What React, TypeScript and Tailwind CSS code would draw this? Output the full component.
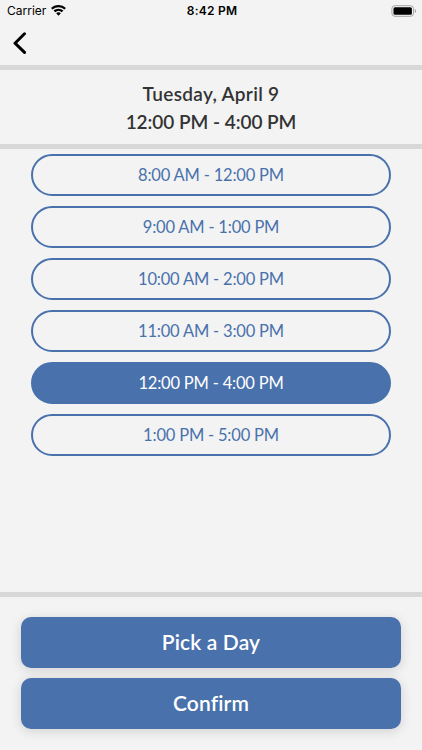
import clsx from 'clsx';

const slots = [
  '8:00 AM - 12:00 PM',
  '9:00 AM - 1:00 PM',
  '10:00 AM - 2:00 PM',
  '11:00 AM - 3:00 PM',
  '12:00 PM - 4:00 PM',
  '1:00 PM - 5:00 PM',
];

const selectedSlot = '12:00 PM - 4:00 PM';

function StatusBar() {
  return (
    <div className="grid h-[22px] grid-cols-3 items-center pr-[5px] pl-[7px] font-['Inter',sans-serif] text-black">
      <div className="flex items-center gap-[5px]">
        <span className="text-[12px] leading-[22px]">Carrier</span>
        <svg className="-mt-px" width="15" height="11" viewBox="0 0 15 11" fill="currentColor">
          <path d="M7.5 0C4.6 0 2 1.1 0 2.9l1.6 1.7a8.6 8.6 0 0 1 11.8 0L15 2.9A11 11 0 0 0 7.5 0Z" />
          <path d="M7.5 3.7c-1.9 0-3.6.7-4.9 1.9l1.6 1.7a4.8 4.8 0 0 1 6.6 0l1.6-1.7a7.2 7.2 0 0 0-4.9-1.9Z" />
          <path d="M7.5 7.3c-.9 0-1.7.3-2.3.9l2.3 2.5 2.3-2.5c-.6-.6-1.4-.9-2.3-.9Z" />
        </svg>
      </div>
      <span className="text-center text-[12px] leading-[22px] font-semibold tracking-[0.25px]">8:42 PM</span>
      <svg className="-mt-px justify-self-end" width="26" height="12" viewBox="0 0 26 12">
        <rect x="0.9" y="0.7" width="21.6" height="10.6" rx="3" fill="none" stroke="#a3a3a3" />
        <rect x="2.5" y="2.3" width="18.4" height="7.4" rx="1.5" fill="#000" />
        <path d="M23.8 4v4c.8-.3 1.3-1.1 1.3-2s-.5-1.7-1.3-2Z" fill="#a3a3a3" />
      </svg>
    </div>
  );
}

function SlotButton({ label, selected }: { label: string; selected: boolean }) {
  return (
    <button
      type="button"
      className={clsx(
        'flex h-[42px] w-full items-center justify-center rounded-full border-2 border-[#4971ac] pb-px text-[16.5px] leading-6 tracking-[-0.2px]',
        selected ? 'bg-[#4971ac] text-white' : 'text-[#4971ac]',
      )}
    >
      {label}
    </button>
  );
}

function ActionButton({ label }: { label: string }) {
  return (
    <button
      type="button"
      className="flex h-[51px] w-full items-center justify-center rounded-[10px] bg-[#4971ac] pb-0.5 text-[21px] font-semibold tracking-[0.15px] text-white shadow-[0_2px_12px_rgba(0,0,0,0.14)] [font-variant-ligatures:none]"
    >
      {label}
    </button>
  );
}

export default function App() {
  return (
    <div className="flex h-screen w-full flex-col overflow-hidden bg-[#f3f3f3] font-['Lato',sans-serif]">
      <StatusBar />
      <nav className="flex h-[43px] items-center pb-0.5 pl-3">
        <button type="button" aria-label="Back">
          <svg
            width="15"
            height="22"
            viewBox="0 0 15 22"
            fill="none"
            stroke="#000"
            strokeWidth="3"
            strokeLinecap="round"
            strokeLinejoin="round"
          >
            <path d="M12.5 1.8 3 11.2l9.5 9.2" />
          </svg>
        </button>
      </nav>
      <header className="flex h-[84px] flex-col items-center justify-center border-y-5 border-[#d8d8d8] pt-0.5 text-[19px] leading-7 font-semibold text-[#333]">
        <h1 className="tracking-[0.3px]">Tuesday, April 9</h1>
        <p className="tracking-[-0.05px]">12:00 PM - 4:00 PM</p>
      </header>
      <main className="flex flex-1 flex-col gap-2.5 px-[31px] pt-[5px]">
        {slots.map((slot) => (
          <SlotButton key={slot} label={slot} selected={slot === selectedSlot} />
        ))}
      </main>
      <footer className="flex h-[158px] flex-col gap-2.5 border-t-5 border-[#d8d8d8] px-[21px] pt-5">
        <ActionButton label="Pick a Day" />
        <ActionButton label="Confirm" />
      </footer>
    </div>
  );
}
